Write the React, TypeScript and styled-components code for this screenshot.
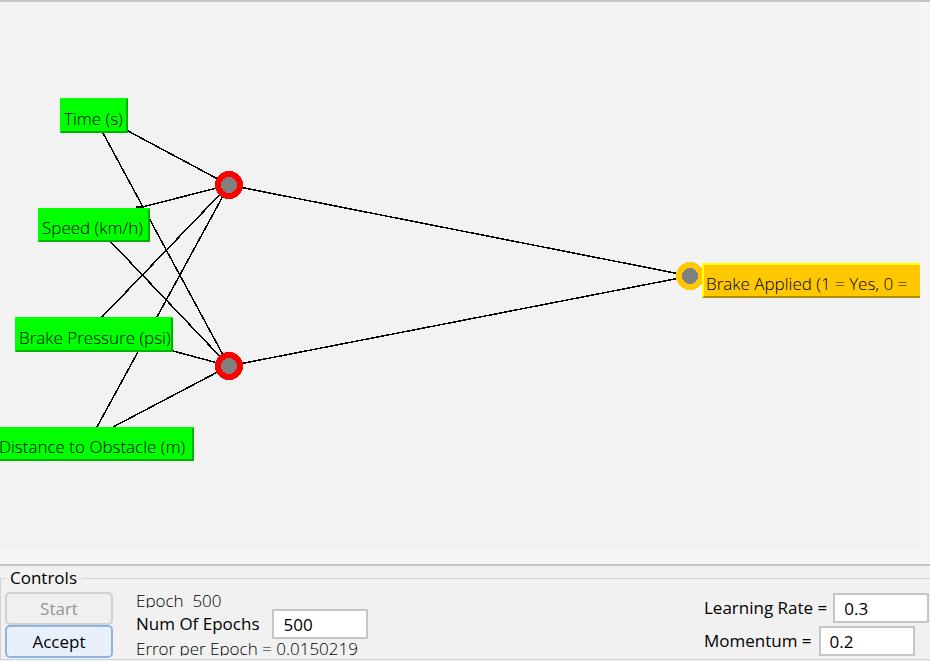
import React from "react";
import styled, { createGlobalStyle, css } from "styled-components";

const GlobalStyle = createGlobalStyle`
  * { box-sizing: border-box; }
  body {
    margin: 0;
    background: #f1f1f1;
    color: #000;
    font: 17px/24px "Open Sans", "Noto Sans", sans-serif;
  }
`;

const Page = styled.main`
  display: flex;
  flex-direction: column;
  min-height: 100vh;
  overflow: hidden;
`;

const Viewport = styled.section`
  flex: 1;
  display: flex;
  padding: 0 10px 15px 0;
  border-top: 2px solid #c5c5c5;
  border-bottom: 2px solid #c5c5c5;
  background: #f5f5f5;
`;

const Network = styled.div`
  position: relative;
  flex: 1;
  overflow: hidden;
  background: #f2f2f2;
`;

const Wires = styled.svg`
  position: absolute;
  top: 0;
  left: 0;
  width: 100%;
  height: 100%;
`;

const NodeLabel = styled.div<{ $x: number; $y: number; $w: number; $h: number; $output?: boolean }>`
  position: absolute;
  left: ${(p) => p.$x}px;
  top: ${(p) => p.$y}px;
  display: flex;
  align-items: flex-end;
  width: ${(p) => p.$w}px;
  height: ${(p) => p.$h}px;
  padding-left: 2px;
  border: 2px solid;
  border-color: #00ff00 #00b200 #00b200 #00ff00;
  background: #00ff00;
  font-weight: 300;
  line-height: 24px;
  white-space: nowrap;
  ${(p) =>
    p.$output &&
    css`
      border-color: #ffff00 #b28c00 #b28c00 #ffff00;
      background: #ffc800;
    `}
`;

const Controls = styled.fieldset`
  display: grid;
  grid-template-columns: 108px 1fr 225px;
  column-gap: 23px;
  min-width: 0;
  margin: 0 0 1px;
  padding: 2px 1px 1px 4px;
  border: 1px solid #d2d2d2;
  border-right: 0;
`;

const Legend = styled.legend`
  margin-left: 1px;
  padding: 0 4px;
`;

const Buttons = styled.div`
  display: flex;
  flex-direction: column;
`;

const Button = styled.button`
  height: 33px;
  padding: 0;
  border: 2px solid #8db4dc;
  border-radius: 5px;
  background: #e8f1fb;
  color: #000;
  font: inherit;
  &:disabled {
    border-color: #d0d0d0;
    background: #f0f0f0;
    color: #949494;
  }
`;

const Progress = styled.div`
  display: flex;
  flex-direction: column;
  gap: 1px;
`;

const Readout = styled.output`
  height: 16px;
  overflow: hidden;
  font-weight: 300;
  line-height: 18px;
  white-space: pre;
`;

const Settings = styled.div`
  display: flex;
  flex-direction: column;
  gap: 3px;
  padding-top: 1px;
`;

const Field = styled.div<{ $gap: number }>`
  display: flex;
  align-items: center;
  gap: ${(p) => p.$gap}px;
  white-space: nowrap;
`;

const Input = styled.input`
  width: 96px;
  height: 30px;
  padding: 0 9px;
  border: 2px solid #c6c6c6;
  border-radius: 0;
  background: #fff;
  color: #000;
  font: inherit;
`;

const inputs = [
  { text: "Time (s)", x: 60, y: 96, w: 68, h: 35 },
  { text: "Speed (km/h)", x: 38, y: 206, w: 112, h: 34 },
  { text: "Brake Pressure (psi)", x: 15, y: 315, w: 158, h: 35 },
  { text: "Distance to Obstacle (m)", x: -5, y: 425, w: 199, h: 34 },
];

const wires = [
  "128,129 229,183",
  "103,131 229,364",
  "136,205 142,205 229,183",
  "111,240 229,364",
  "102,315 229,183",
  "173,349 229,364",
  "97,425 229,183",
  "113,425 229,364",
  "229,183 690,274",
  "229,364 690,274",
];

const neurons = [
  { x: 229, y: 183, color: "#ff0000" },
  { x: 229, y: 364, color: "#ff0000" },
  { x: 690, y: 274, color: "#ffc800" },
];

export default function App() {
  return (
    <Page>
      <GlobalStyle />
      <Viewport>
        <Network>
          <Wires aria-hidden="true">
            {wires.map((points) => (
              <polyline key={points} points={points} fill="none" stroke="#000" strokeWidth="1.5" shapeRendering="crispEdges" />
            ))}
            {neurons.map((n) => (
              <g key={`${n.x}-${n.y}`} shapeRendering="crispEdges">
                <circle cx={n.x} cy={n.y} r="14" fill={n.color} />
                <circle cx={n.x} cy={n.y} r="8" fill="#808080" />
              </g>
            ))}
          </Wires>
          {inputs.map((n) => (
            <NodeLabel key={n.text} $x={n.x} $y={n.y} $w={n.w} $h={n.h}>
              {n.text}
            </NodeLabel>
          ))}
          <NodeLabel $x={702} $y={261} $w={270} $h={35} $output>
            Brake Applied (1 = Yes, 0 =
          </NodeLabel>
        </Network>
      </Viewport>
      <Controls>
        <Legend>Controls</Legend>
        <Buttons>
          <Button type="button" disabled>Start</Button>
          <Button type="button">Accept</Button>
        </Buttons>
        <Progress>
          <Readout>Epoch  500</Readout>
          <Field $gap={13}>
            <label htmlFor="epochs">Num Of Epochs</label>
            <Input id="epochs" defaultValue="500" />
          </Field>
          <Readout>Error per Epoch = 0.0150219</Readout>
        </Progress>
        <Settings>
          <Field $gap={6}>
            <label htmlFor="rate">Learning Rate =</label>
            <Input id="rate" defaultValue="0.3" />
          </Field>
          <Field $gap={7}>
            <label htmlFor="momentum">Momentum =</label>
            <Input id="momentum" defaultValue="0.2" />
          </Field>
        </Settings>
      </Controls>
    </Page>
  );
}
